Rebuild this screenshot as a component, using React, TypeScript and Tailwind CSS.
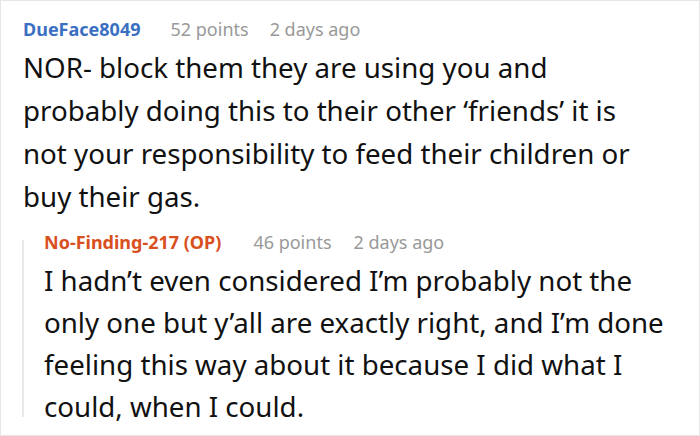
export default function App() {
  return (
    <div className="w-[700px] h-[436px] overflow-hidden bg-white border border-[#e6e6e6] font-['Noto_Sans',sans-serif]">
      <div className="pl-[22px] pt-[16px]">
        <div className="flex items-baseline text-[18px] leading-[24px] mb-[5px]">
          <span className="font-bold text-[#3b6fc2]">DueFace8049</span>
          <span className="ml-[30px] text-[#999999]">52 points</span>
          <span className="ml-[21px] text-[#999999]">2 days ago</span>
        </div>
        <p className="w-[630px] text-[27.7px] leading-[43px] text-[#111111]">
          NOR- block them they are using you and probably doing this to their other ‘friends’ it is not your
          responsibility to feed their children or buy their gas.
        </p>

        <div className="flex mt-[12px] -ml-px">
          <div className="w-[2px] bg-[#e8e8e8] my-[10px] shrink-0" />
          <div className="pl-[20px]">
            <div className="flex items-baseline text-[18px] leading-[24px] mb-[5px]">
              <span className="font-bold text-[#d9501e]">No-Finding-217 (OP)</span>
              <span className="ml-[32px] text-[#999999]">46 points</span>
              <span className="ml-[22px] text-[#999999]">2 days ago</span>
            </div>
            <p className="w-[640px] text-[27.7px] leading-[42px] text-[#111111]">
              I hadn’t even considered I’m probably not the only one but y’all are exactly right, and I’m done
              feeling this way about it because I did what I could, when I could.
            </p>
          </div>
        </div>
      </div>
    </div>
  );
}
